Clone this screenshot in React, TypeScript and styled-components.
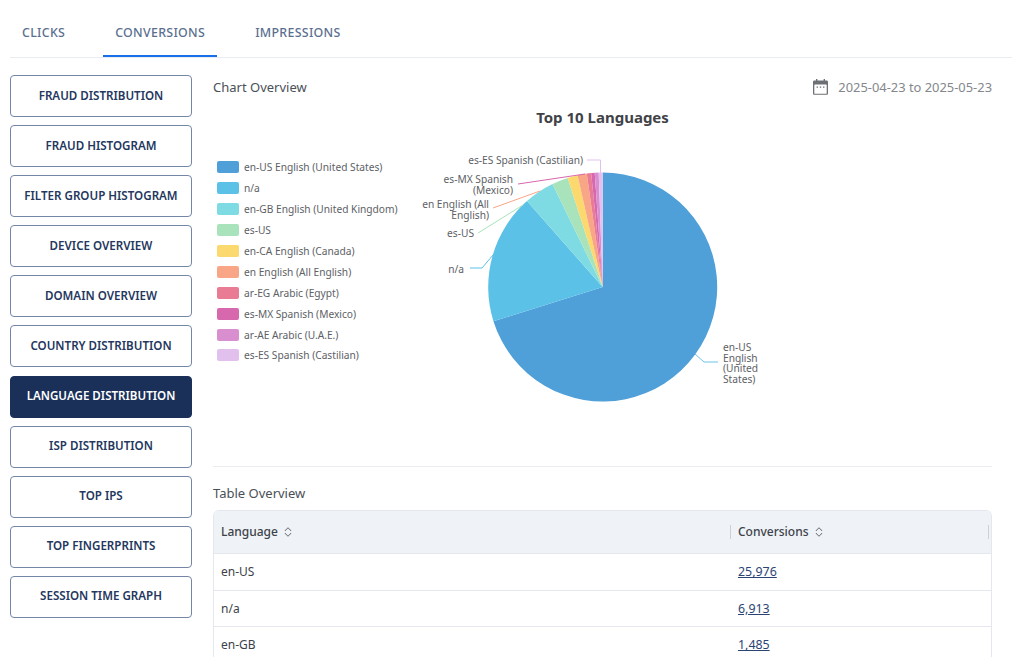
import React, { FC } from 'react';
import styled, { createGlobalStyle } from 'styled-components';

const FONT = `'Noto Sans', 'Open Sans', sans-serif`;

const GlobalStyle = createGlobalStyle`
  html, body {
    margin: 0;
    height: 657px;
    overflow: hidden;
    background: #fff;
    font-family: ${FONT};
  }
`;

const Page = styled.div`
  width: 1024px;
  height: 657px;
  overflow: hidden;
  box-sizing: border-box;
  padding: 8px 12px 0 10px;
`;

const TabBar = styled.div`
  display: flex;
  gap: 26px;
  height: 49px;
  border-bottom: 1px solid #e9ecf1;
`;

const Tab = styled.div<{ $active?: boolean }>`
  height: 49px;
  box-sizing: border-box;
  padding: 2px 12px 0;
  display: flex;
  align-items: center;
  font-size: 12.4px;
  font-weight: 500;
  letter-spacing: 0.3px;
  color: #5b6f8f;
  border-bottom: 2px solid ${p => (p.$active ? '#1a6fe8' : 'transparent')};
`;

const Body = styled.div`
  display: flex;
  margin-top: 17px;
`;

const Sidebar = styled.div`
  width: 182px;
  flex: none;
  display: flex;
  flex-direction: column;
  gap: 8.1px;
`;

const SideButton = styled.div<{ $active?: boolean }>`
  height: 42px;
  box-sizing: border-box;
  padding-bottom: 2px;
  border-radius: 4px;
  border: 1px solid ${p => (p.$active ? '#1a3059' : '#7486a6')};
  background: ${p => (p.$active ? '#1a3059' : '#fff')};
  color: ${p => (p.$active ? '#fff' : '#24375e')};
  display: flex;
  align-items: center;
  justify-content: center;
  font-size: 11.6px;
  font-weight: 600;
  white-space: nowrap;
`;

const Main = styled.div`
  width: 779px;
  margin-left: 21px;
  flex: none;
`;

const HeadRow = styled.div`
  display: flex;
  justify-content: space-between;
  align-items: center;
  height: 24px;
`;

const SectionTitle = styled.div`
  font-size: 13px;
  color: #4a5058;
`;

const DateRange = styled.div`
  display: flex;
  align-items: center;
  gap: 9px;
  font-size: 12.9px;
  color: #84888d;
`;

const ChartTitle = styled.div`
  text-align: center;
  font-size: 15px;
  font-weight: 700;
  color: #3f4347;
  line-height: 20px;
  margin: 8px 0 3px;
`;

const ChartRow = styled.div`
  display: flex;
  height: 330px;
`;

const Legend = styled.div`
  width: 197px;
  flex: none;
  box-sizing: border-box;
  padding: 27px 0 0 4px;
  display: flex;
  flex-direction: column;
`;

const LegendItem = styled.div`
  height: 20.9px;
  display: flex;
  align-items: center;
  gap: 5px;
  font-size: 10.2px;
  color: #5d6166;
  white-space: nowrap;
`;

const Swatch = styled.span<{ $color: string }>`
  width: 22px;
  height: 12px;
  border-radius: 2px;
  background: ${p => p.$color};
`;

const Divider = styled.div`
  height: 1px;
  background: #e9ecf1;
  margin-top: 6px;
`;

const TableTitle = styled(SectionTitle)`
  margin-top: 17px;
  margin-bottom: 8px;
  line-height: 18px;
`;

const Table = styled.div`
  border: 1px solid #e4e8ee;
  border-bottom: 0;
  border-radius: 6px 6px 0 0;
  overflow: hidden;
`;

const Row = styled.div<{ $head?: boolean }>`
  display: grid;
  grid-template-columns: 516px 1fr;
  align-items: center;
  height: ${p => (p.$head ? '42px' : '35.6px')};
  background: ${p => (p.$head ? '#eff2f6' : '#fff')};
  border-bottom: 1px solid #e4e8ee;
  font-size: 12px;
  color: #3c4249;
`;

const Cell = styled.div<{ $head?: boolean; $sep?: boolean; $count?: boolean }>`
  position: relative;
  padding-left: ${p => (p.$sep || p.$count ? '8px' : '7px')};
  padding-bottom: ${p => (p.$head ? '1px' : '0')};
  display: flex;
  align-items: center;
  gap: 6px;
  font-weight: ${p => (p.$head ? 500 : 400)};
  ${p =>
    p.$sep
      ? `&::before {
    content: '';
    position: absolute;
    left: 0;
    top: 2px;
    bottom: 2px;
    width: 1px;
    background: #ccd1d8;
  }
  &::after {
    content: '';
    position: absolute;
    right: 2px;
    top: 2px;
    bottom: 2px;
    width: 1px;
    background: #ccd1d8;
  }`
      : ''}
`;

const CountLink = styled.a`
  color: #2c4474;
  font-size: 12.4px;
  text-decoration: underline;
`;

const CalendarIcon: FC = () => (
  <svg width="17" height="18" viewBox="0 0 17 18">
    <path d="M4 1h1.4v1.6h6.2V1H13v1.6h1.6c.8 0 1.4.6 1.4 1.4v11.4c0 .8-.6 1.4-1.4 1.4H2.4c-.8 0-1.4-.6-1.4-1.4V4c0-.8.6-1.4 1.4-1.4H4z" fill="#6d7074" />
    <rect x="2.3" y="6.4" width="12.4" height="9.3" rx=".5" fill="#fff" />
    <path d="M4.6 8.4H6v1.4H4.6zM7.8 8.4h1.4v1.4H7.8zM11 8.4h1.4v1.4H11z" fill="#6d7074" />
  </svg>
);

const SortIcon: FC = () => (
  <svg width="8" height="10" viewBox="0 0 8 10" fill="none" stroke="#5c6269" strokeWidth="1">
    <path d="M1 3.9 3.2 1.4a1 1 0 0 1 1.6 0L7 3.9" />
    <path d="M1 6.1 3.2 8.6a1 1 0 0 0 1.6 0L7 6.1" />
  </svg>
);

const buttons = [
  'FRAUD DISTRIBUTION',
  'FRAUD HISTOGRAM',
  'FILTER GROUP HISTOGRAM',
  'DEVICE OVERVIEW',
  'DOMAIN OVERVIEW',
  'COUNTRY DISTRIBUTION',
  'LANGUAGE DISTRIBUTION',
  'ISP DISTRIBUTION',
  'TOP IPS',
  'TOP FINGERPRINTS',
  'SESSION TIME GRAPH',
];

// end angle is degrees clockwise from 12 o'clock, read off the chart
const slices = [
  { name: 'en-US English (United States)', color: '#4f9fd8', end: 252.6 },
  { name: 'n/a', color: '#5bc1e6', end: 318.6 },
  { name: 'en-GB English (United Kingdom)', color: '#7fdbe3', end: 334 },
  { name: 'es-US', color: '#a9e3bb', end: 342.2 },
  { name: 'en-CA English (Canada)', color: '#fbd96e', end: 347.3 },
  { name: 'en English (All English)', color: '#f8a686', end: 352 },
  { name: 'ar-EG Arabic (Egypt)', color: '#ea7b94', end: 354.2 },
  { name: 'es-MX Spanish (Mexico)', color: '#d868ad', end: 356 },
  { name: 'ar-AE Arabic (U.A.E.)', color: '#d98fcf', end: 358 },
  { name: 'es-ES Spanish (Castilian)', color: '#e2c0ee', end: 360 },
];

const CX = 602.7;
const CY = 287;
const R = 114.5;

const point = (deg: number) => {
  const a = (deg * Math.PI) / 180;
  return `${(CX + R * Math.sin(a)).toFixed(2)} ${(CY - R * Math.cos(a)).toFixed(2)}`;
};

const wedge = (from: number, to: number) =>
  `M${CX} ${CY}L${point(from)}A${R} ${R} 0 ${to - from > 180 ? 1 : 0} 1 ${point(to)}Z`;

const labels: { x: number; y: number; anchor: 'start' | 'end'; lines: string[] }[] = [
  { x: 723, y: 351, anchor: 'start', lines: ['en-US', 'English', '(United', 'States)'] },
  { x: 464, y: 273, anchor: 'end', lines: ['n/a'] },
  { x: 474, y: 237, anchor: 'end', lines: ['es-US'] },
  { x: 489, y: 208, anchor: 'end', lines: ['en English (All', 'English)'] },
  { x: 513, y: 183, anchor: 'end', lines: ['es-MX Spanish', '(Mexico)'] },
  { x: 583, y: 164, anchor: 'end', lines: ['es-ES Spanish (Castilian)'] },
];

const leaders = [
  { d: 'M695 354 L704 362 L718 362', color: '#6cc3ea' },
  { d: 'M493 255 L482 268 L470 268', color: '#5bc1e6' },
  { d: 'M523 205 L478 233', color: '#a9e3bb' },
  { d: 'M540 191 L493 208', color: '#f8a686' },
  { d: 'M585 174 L518 184', color: '#d868ad' },
  { d: 'M587 160 L600.5 160 L600.5 175', color: '#e2c0ee' },
];

const PieChart: FC = () => (
  <svg width="582" height="330" viewBox="410 130 582 330" fontFamily={FONT} fontSize="10.2" fill="#5d6166">
    {slices.map((s, i) => (
      <path key={s.name} d={wedge(i === 0 ? 0 : slices[i - 1].end, s.end)} fill={s.color} />
    ))}
    {leaders.map(l => (
      <path key={l.d} d={l.d} fill="none" stroke={l.color} strokeWidth="1" />
    ))}
    {labels.map(l => (
      <text key={l.lines[0]} x={l.x} y={l.y} textAnchor={l.anchor}>
        {l.lines.map((t, i) => (
          <tspan key={t} x={l.x} dy={i === 0 ? 0 : 10.6}>
            {t}
          </tspan>
        ))}
      </text>
    ))}
  </svg>
);

const rows = [
  ['en-US', '25,976'],
  ['n/a', '6,913'],
  ['en-GB', '1,485'],
];

const App: FC = () => (
  <>
    <GlobalStyle />
    <Page>
      <TabBar>
        <Tab>CLICKS</Tab>
        <Tab $active>CONVERSIONS</Tab>
        <Tab>IMPRESSIONS</Tab>
      </TabBar>
      <Body>
        <Sidebar>
          {buttons.map(b => (
            <SideButton key={b} $active={b === 'LANGUAGE DISTRIBUTION'}>
              {b}
            </SideButton>
          ))}
        </Sidebar>
        <Main>
          <HeadRow>
            <SectionTitle>Chart Overview</SectionTitle>
            <DateRange>
              <CalendarIcon />
              2025-04-23 to 2025-05-23
            </DateRange>
          </HeadRow>
          <ChartTitle>Top 10 Languages</ChartTitle>
          <ChartRow>
            <Legend>
              {slices.map(s => (
                <LegendItem key={s.name}>
                  <Swatch $color={s.color} />
                  {s.name}
                </LegendItem>
              ))}
            </Legend>
            <PieChart />
          </ChartRow>
          <Divider />
          <TableTitle>Table Overview</TableTitle>
          <Table>
            <Row $head>
              <Cell $head>
                Language <SortIcon />
              </Cell>
              <Cell $head $sep>
                Conversions <SortIcon />
              </Cell>
            </Row>
            {rows.map(([lang, count]) => (
              <Row key={lang}>
                <Cell>{lang}</Cell>
                <Cell $count>
                  <CountLink href="#">{count}</CountLink>
                </Cell>
              </Row>
            ))}
          </Table>
        </Main>
      </Body>
    </Page>
  </>
);

export default App;
